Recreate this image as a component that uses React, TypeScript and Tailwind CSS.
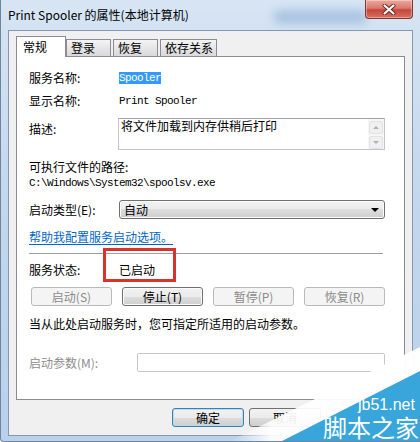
import React from "react";

const btnBase =
  "flex h-[19px] w-[81px] items-center justify-center rounded-[3px] border text-[12px] leading-none";
const btnNormal = `${btnBase} border-[#707070] bg-[linear-gradient(to_bottom,#f2f2f2_0%,#ebebeb_50%,#dddddd_50%,#cfcfcf_100%)] shadow-[inset_0_0_0_1px_#fbfbfb] text-black`;
const btnDisabled = `${btnBase} border-[#b7babc] bg-[#f4f4f4] text-[#8a8a8a]`;

const mono = "font-['Liberation_Mono',monospace] text-[11px] tracking-[-0.6px]";

const Tab = ({ w, children }: { w: string; children: React.ReactNode }) => (
  <div
    className={`${w} flex h-[17px] items-center border-x border-t border-[#898c95] bg-[linear-gradient(to_bottom,#f4f4f4,#e6e6e6_50%,#d9d9d9)] pl-[4px] leading-[16px]`}
  >
    {children}
  </div>
);

const Row = ({
  label,
  children,
  className = "",
}: {
  label: string;
  children?: React.ReactNode;
  className?: string;
}) => (
  <div className={`flex h-[16px] items-center ${className}`}>
    <span className="w-[90px] shrink-0 leading-[16px]">{label}</span>
    {children}
  </div>
);

const CloseButton = () => (
  <div className="ml-auto mr-[7px] flex h-[19px] w-[48px] items-center justify-center rounded-b-[4px] border border-t-0 border-[#83342e] bg-[linear-gradient(to_bottom,#eaa99f_0%,#d97a6e_45%,#c5463a_55%,#d87062_100%)] shadow-[inset_0_0_0_1px_rgba(255,255,255,0.35)]">
    <svg width="14" height="11" viewBox="0 0 14 11">
      <path d="M2.5 1.5 L11.5 9.5 M11.5 1.5 L2.5 9.5" stroke="#6a241f" strokeWidth="4" strokeLinecap="round" />
      <path d="M2.5 1.5 L11.5 9.5 M11.5 1.5 L2.5 9.5" stroke="#ffffff" strokeWidth="2.2" strokeLinecap="round" />
    </svg>
  </div>
);

export default function App() {
  return (
    <div className="relative h-[442px] w-[420px] overflow-hidden rounded-bl-[4px] border-b border-l border-[#6f849d] bg-[linear-gradient(to_bottom,#d7e5f4,#c4d8ee_40%,#b9d1eb)] font-['Noto_Sans_CJK_SC',sans-serif] text-[12px] text-black">
      <div className="absolute left-[272px] top-[10px] h-[14px] w-[95px] rounded-full bg-[#8eaed4] opacity-60 blur-[5px]" />

      {/* title bar */}
      <div className="relative flex h-[30px] items-start">
        <span className="pl-[7px] pt-[7px] text-[12px] leading-[16px]">
          Print Spooler 的属性(本地计算机)
        </span>
        <CloseButton />
      </div>

      {/* client area */}
      <div className="mx-[7px] h-[406px] border border-[#8498b2] bg-[#f0f0f0]">
        <div className="flex h-[25px] items-end pl-[7px]">
          <div className="relative z-10 -mb-px flex h-[21px] w-[50px] items-start border-x border-t border-[#898c95] bg-white pl-[6px] pt-[2px] leading-[16px]">
            常规
          </div>
          <Tab w="w-[45px]">登录</Tab>
          <div className="ml-[2px]">
            <Tab w="w-[45px]">恢复</Tab>
          </div>
          <div className="ml-[2px]">
            <Tab w="w-[57px]">依存关系</Tab>
          </div>
        </div>

        {/* tab panel */}
        <div className="mx-[7px] h-[344px] border border-[#898c95] bg-white pl-[12px]">
          <Row label="服务名称:" className="mt-[13px]">
            <span className={`${mono} bg-[#3399ff] leading-[12px] text-white`}>Spooler</span>
          </Row>
          <Row label="显示名称:" className="mt-[7px]">
            <span className={mono}>Print Spooler</span>
          </Row>

          <div className="mt-[9px] flex items-start">
            <span className="w-[89px] shrink-0 pt-[3px] leading-[16px]">描述:</span>
            <div className="flex h-[32px] w-[267px] border border-[#c2c5cc] border-t-[#9fa2aa] bg-white">
              <div className="flex-1 pl-[2px] leading-[14px]">将文件加载到内存供稍后打印</div>
              <div className="flex w-[16px] flex-col items-center gap-[2px] bg-[#f7f7f7] pt-[2px]">
                <div className="flex h-[13px] w-[14px] items-center justify-center rounded-[2px] border border-[#e2e2e2] bg-[#f0f0f0]">
                  <div className="h-0 w-0 border-x-[3px] border-b-[3px] border-x-transparent border-b-[#b0b0b0]" />
                </div>
                <div className="flex h-[13px] w-[14px] items-center justify-center rounded-[2px] border border-[#e2e2e2] bg-[#f0f0f0]">
                  <div className="h-0 w-0 border-x-[3px] border-t-[3px] border-x-transparent border-t-[#b0b0b0]" />
                </div>
              </div>
            </div>
          </div>

          <div className="mt-[9px] h-[16px] leading-[16px]">可执行文件的路径:</div>
          <div className={`h-[16px] leading-[16px] ${mono}`}>C:\Windows\System32\spoolsv.exe</div>

          <div className="mt-[9px] flex h-[19px] items-center">
            <span className="w-[90px] shrink-0 leading-[16px]">启动类型(E):</span>
            <div className="flex h-[19px] w-[266px] items-center justify-between rounded-[3px] border border-[#707070] bg-[linear-gradient(to_bottom,#f2f2f2_0%,#ebebeb_50%,#dddddd_50%,#cfcfcf_100%)] pl-[4px] pr-[5px] shadow-[inset_0_0_0_1px_#fbfbfb]">
              <span className="leading-[16px]">自动</span>
              <div className="h-0 w-0 border-x-[4px] border-t-[4px] border-x-transparent border-t-black" />
            </div>
          </div>

          <div className="mt-[10px] h-[16px] leading-[16px] text-[#0066cc] underline underline-offset-2">
            帮助我配置服务启动选项。
          </div>

          <div className="mt-[8px] h-px w-[354px] bg-[#a0a0a0]" />

          <Row label="服务状态:" className="mt-[8px]">
            <span className="leading-[16px]">已启动</span>
          </Row>

          <div className="mt-[9px] flex gap-[10px] pl-[2px]">
            <div className={btnDisabled}>启动(S)</div>
            <div className={btnNormal}>停止(T)</div>
            <div className={btnDisabled}>暂停(P)</div>
            <div className={btnDisabled}>恢复(R)</div>
          </div>

          <div className="mt-[10px] h-[16px] leading-[16px]">
            当从此处启动服务时，您可指定所适用的启动参数。
          </div>

          <div className="mt-[21px] flex h-[19px] items-center">
            <span className="w-[108px] shrink-0 leading-[16px] text-[#8d8d8d]">启动参数(M):</span>
            <div className="h-[19px] w-[248px] rounded-[2px] border border-[#c4c7cc] bg-white" />
          </div>
        </div>

        {/* dialog buttons */}
        <div className="mt-[8px] flex justify-end gap-[5px] pr-[14px]">
          <div className="flex h-[19px] w-[72px] items-center justify-center rounded-[3px] border border-[#3c7fb1] bg-[linear-gradient(to_bottom,#f2f2f2_0%,#ebebeb_50%,#dddddd_50%,#cfcfcf_100%)] shadow-[inset_0_0_0_1px_#b6dcf3] leading-none">
            确定
          </div>
          <div className="flex h-[19px] w-[72px] items-center justify-center rounded-[3px] border border-[#707070] bg-[linear-gradient(to_bottom,#f2f2f2_0%,#ebebeb_50%,#dddddd_50%,#cfcfcf_100%)] leading-none">
            取消
          </div>
          <div className="flex h-[19px] w-[72px] items-center justify-center rounded-[3px] border border-[#b7babc] bg-[#f4f4f4] leading-none text-[#8a8a8a]">
            应用(A)
          </div>
        </div>
      </div>

      {/* red annotation box */}
      <div className="absolute left-[102px] top-[248px] h-[34px] w-[73px] border-[3px] border-[#d9322b]" />

      {/* watermark */}
      <div className="pointer-events-none absolute bottom-0 right-0 h-[100px] w-[190px]">
        <svg width="190" height="100" className="absolute inset-0">
          <defs>
            <linearGradient id="wm" x1="0" y1="0" x2="1" y2="0">
              <stop offset="0" stopColor="#ffffff" stopOpacity="0" />
              <stop offset="0.22" stopColor="#ffffff" stopOpacity="0.92" />
              <stop offset="1" stopColor="#ffffff" stopOpacity="0.97" />
            </linearGradient>
          </defs>
          <polygon points="0,100 190,6 190,100" fill="url(#wm)" />
          <polygon points="52,100 190,30 190,100" fill="#38a5db" />
        </svg>
        <span className="absolute left-[128px] top-[56px] font-['Liberation_Sans',sans-serif] text-[16px] leading-[16px] text-white">
          jb51.net
        </span>
        <span className="absolute left-[93px] top-[74px] whitespace-nowrap text-[24px] leading-[24px] text-white">
          脚本之家
        </span>
      </div>
    </div>
  );
}
